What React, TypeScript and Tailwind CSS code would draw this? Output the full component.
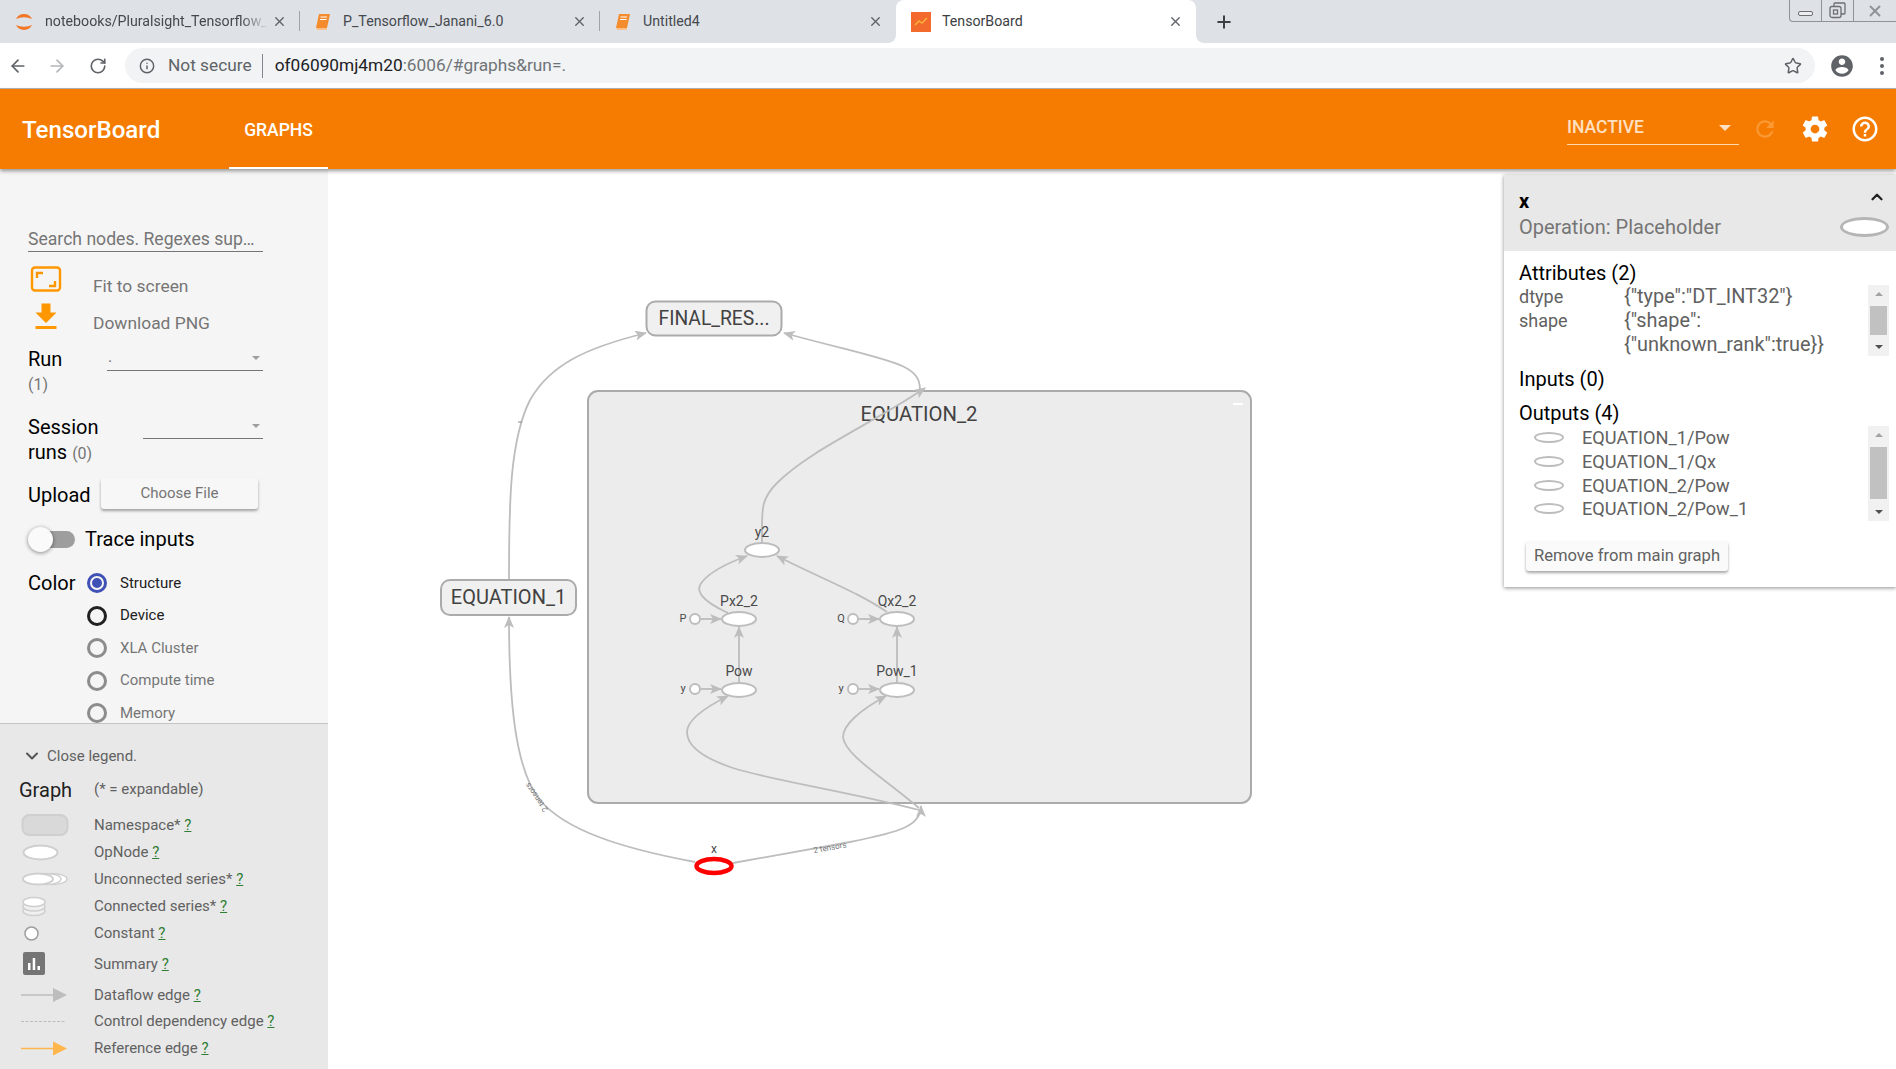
import { ArrowLeft, ArrowRight, RotateCw, Info, Star, X, Plus, ChevronDown, ChevronUp } from "lucide-react";

const P = {
  gear: "M19.43 12.98c.04-.32.07-.64.07-.98s-.03-.66-.07-.98l2.11-1.65c.19-.15.24-.42.12-.64l-2-3.46c-.12-.22-.39-.3-.61-.22l-2.49 1c-.52-.4-1.08-.73-1.69-.98l-.38-2.65C14.46 2.18 14.25 2 14 2h-4c-.25 0-.46.18-.49.42l-.38 2.65c-.61.25-1.17.59-1.69.98l-2.49-1c-.23-.09-.49 0-.61.22l-2 3.46c-.13.22-.07.49.12.64l2.11 1.65c-.04.32-.07.65-.07.98s.03.66.07.98l-2.11 1.65c-.19.15-.24.42-.12.64l2 3.46c.12.22.39.3.61.22l2.49-1c.52.4 1.08.73 1.69.98l.38 2.65c.03.24.24.42.49.42h4c.25 0 .46-.18.49-.42l.38-2.65c.61-.25 1.17-.59 1.69-.98l2.49 1c.23.09.49 0 .61-.22l2-3.46c.12-.22.07-.49-.12-.64l-2.11-1.65zM12 15.5c-1.93 0-3.5-1.57-3.5-3.5s1.57-3.5 3.5-3.5 3.5 1.57 3.5 3.5-1.57 3.5-3.5 3.5z",
  help: "M11 18h2v-2h-2v2zm1-16C6.48 2 2 6.48 2 12s4.48 10 10 10 10-4.48 10-10S17.52 2 12 2zm0 18c-4.41 0-8-3.59-8-8s3.59-8 8-8 8 3.59 8 8-3.59 8-8 8zm0-14c-2.21 0-4 1.79-4 4h2c0-1.1.9-2 2-2s2 .9 2 2c0 2-3 1.75-3 5h2c0-2.25 3-2.5 3-5 0-2.21-1.79-4-4-4z",
  refresh: "M17.65 6.35C16.2 4.9 14.21 4 12 4c-4.42 0-7.99 3.58-7.99 8s3.57 8 7.99 8c3.73 0 6.84-2.55 7.73-6h-2.08c-.82 2.33-3.04 4-5.65 4-3.31 0-6-2.69-6-6s2.69-6 6-6c1.66 0 3.14.69 4.22 1.78L13 11h7V4l-2.35 2.35z",
  user: "M12 2C6.48 2 2 6.48 2 12s4.48 10 10 10 10-4.48 10-10S17.52 2 12 2zm0 3c1.66 0 3 1.34 3 3s-1.34 3-3 3-3-1.34-3-3 1.34-3 3-3zm0 14.2c-2.5 0-4.71-1.28-6-3.22.03-1.99 4-3.08 6-3.08 1.99 0 5.97 1.09 6 3.08-1.29 1.94-3.5 3.22-6 3.22z",
  download: "M19 9h-4V3H9v6H5l7 7 7-7zM5 18v2h14v-2H5z",
};

function BookIcon() {
  return (
    <svg width="18" height="20" viewBox="0 0 18 20" className="shrink-0">
      <path d="M5 2h11l-3 14H2z" fill="#f48b2c" />
      <path d="M2 16h11l-.5 2H3.5z" fill="#fbc08a" />
      <path d="M6.5 5h6.5M6 7.5h6.5" stroke="#fff" strokeWidth="1" />
    </svg>
  );
}

function Spinner() {
  return (
    <svg width="20" height="22" viewBox="0 0 20 22" className="shrink-0">
      <path d="M2 8a9 9 0 0 1 16 0 12 7 0 0 0-16 0z" fill="#f37626" />
      <path d="M2 14a9 9 0 0 0 16 0 12 7 0 0 1-16 0z" fill="#f37626" />
    </svg>
  );
}

function TbFavicon() {
  return (
    <svg width="20" height="20" viewBox="0 0 20 20" className="shrink-0">
      <rect width="20" height="20" fill="#f26b2c" />
      <path d="M4 13l4-4 3 2 5-5" fill="none" stroke="#fbb03b" strokeWidth="1.5" />
    </svg>
  );
}

function Tab({ icon, title, width, sep, fade, extra }: { icon: React.ReactNode; title: string; width: string; sep?: boolean; fade?: boolean; extra?: string }) {
  return (
    <div className={`${width} ${extra ?? ""} h-full flex items-center bg-[#dee1e6] pl-[14px] pr-[13px] relative`}>
      {icon}
      <span className={`ml-[11px] flex-1 overflow-hidden whitespace-nowrap text-[14.2px] text-[#45494e] ${fade ? "[mask-image:linear-gradient(90deg,#000_88%,transparent)]" : ""}`}>{title}</span>
      <X size={15} strokeWidth={2.2} className="ml-[4px] shrink-0 text-[#5f6368]" />
      {sep && <div className="absolute right-0 top-[11px] h-[20px] w-px bg-[#a0a3a8]" />}
    </div>
  );
}

function WindowControls() {
  return (
    <div className="ml-auto self-start h-[22px] w-[107px] flex border-l border-b border-[#8f9296] rounded-bl-[4px]">
      <div className="w-[32px] border-r border-[#8f9296] flex items-center justify-center">
        <div className="mt-[5px] h-[5px] w-[15px] rounded-[2px] border border-[#6b6e72] bg-[#eceef0]" />
      </div>
      <div className="w-[32px] border-r border-[#8f9296] flex items-center justify-center">
        <svg width="17" height="17" viewBox="0 0 17 17" fill="none" stroke="#6b6e72" strokeWidth="1.3">
          <rect x="1" y="4.5" width="11" height="11" rx="2" />
          <path d="M5 4.5V2a1 1 0 0 1 1-1h9a1 1 0 0 1 1 1v9a1 1 0 0 1-1 1h-3" />
          <rect x="4.5" y="8" width="4" height="4" />
        </svg>
      </div>
      <div className="flex-1 flex items-center justify-center">
        <X size={18} strokeWidth={2.5} className="text-[#8f9296]" />
      </div>
    </div>
  );
}

function Chrome() {
  return (
    <div className="shrink-0">
      <div className="h-[43px] flex bg-white">
        <Tab icon={<Spinner />} title="notebooks/Pluralsight_Tensorflow_" width="w-[300px]" sep fade />
        <Tab icon={<BookIcon />} title="P_Tensorflow_Janani_6.0" width="w-[300px]" sep />
        <Tab icon={<BookIcon />} title="Untitled4" width="w-[296px]" extra="rounded-br-[8px]" />
        <div className="w-[300px] h-full bg-[#dee1e6]">
          <div className="h-full bg-white rounded-t-[8px] flex items-center pl-[15px] pr-[13px]">
            <TbFavicon />
            <span className="ml-[11px] flex-1 text-[14.2px] text-[#3c4043]">TensorBoard</span>
            <X size={15} strokeWidth={2.2} className="text-[#5f6368]" />
          </div>
        </div>
        <div className="flex-1 h-full bg-[#dee1e6] rounded-bl-[8px] flex items-center pl-[18px]">
          <Plus size={20} strokeWidth={2.4} className="text-[#3c4043]" />
          <WindowControls />
        </div>
      </div>
      <div className="h-[46px] bg-white border-b border-[#b4b6ba] flex items-center pl-[7px] pr-[12px]">
        <ArrowLeft size={20} strokeWidth={2} className="text-[#5f6368] ml-px" />
        <ArrowRight size={20} strokeWidth={2} className="text-[#b4b6ba] ml-[19px]" />
        <RotateCw size={18} strokeWidth={2.2} className="text-[#5f6368] ml-[22px]" />
        <div className="ml-[18px] h-[35px] flex-1 rounded-full bg-[#f1f3f4] flex items-center pl-[14px] pr-[13px] text-[17.3px]">
          <Info size={16} strokeWidth={2.2} className="text-[#5f6368]" />
          <span className="ml-[13px] text-[#5f6368]">Not secure</span>
          <span className="ml-[10px] h-[24px] w-px bg-[#80868b]" />
          <span className="ml-[12px] text-[#202124]">of06090mj4m20<span className="text-[#6f7377]">:6006/#graphs&amp;run=.</span></span>
          <Star size={18} strokeWidth={2} className="ml-auto text-[#5f6368]" />
        </div>
        <svg width="26" height="26" viewBox="0 0 24 24" className="ml-[14px]"><path d={P.user} fill="#5f6368" /></svg>
        <div className="ml-[25px] flex flex-col gap-[3px]">
          <div className="h-[4px] w-[4px] rounded-full bg-[#5f6368]" />
          <div className="h-[4px] w-[4px] rounded-full bg-[#5f6368]" />
          <div className="h-[4px] w-[4px] rounded-full bg-[#5f6368]" />
        </div>
      </div>
    </div>
  );
}

function Header() {
  return (
    <div className="h-[80px] shrink-0 bg-[#f57c00] flex items-center relative z-10 shadow-[0_2px_4px_rgba(0,0,0,0.4)] text-white">
      <div className="w-[229px] pl-[22px] pt-[2px] text-[24.1px] font-medium">TensorBoard</div>
      <div className="w-[99px] h-full flex items-center justify-center border-b-2 border-white pt-[5px] text-[17.5px] font-medium">GRAPHS</div>
      <div className="ml-auto flex items-center">
        <div className="w-[172px] h-[32px] border-b border-[#ffd9b0] flex items-center justify-between pr-[8px] pb-[2px] text-[#ffe0c2] text-[17.5px] font-medium">
          INACTIVE
          <span className="h-0 w-0 border-x-[6px] border-t-[6px] border-x-transparent border-t-[#ffe0c2]" />
        </div>
        <svg width="26" height="26" viewBox="0 0 24 24" className="ml-[13px]"><path d={P.refresh} fill="#fb9a35" /></svg>
        <svg width="30" height="30" viewBox="0 0 24 24" className="ml-[22px]"><path d={P.gear} fill="#fff" /></svg>
        <svg width="30" height="30" viewBox="0 0 24 24" className="ml-[20px] mr-[16px]"><path d={P.help} fill="#fff" /></svg>
      </div>
    </div>
  );
}

function Select({ width, value }: { width: string; value?: string }) {
  return (
    <div className={`${width} h-[25px] border-b border-[#757575] flex items-start justify-between pl-px pr-[3px] text-[#757575] text-[16px] leading-[22px]`}>
      <span>{value}</span>
      <span className="mt-[10px] h-0 w-0 border-x-[4px] border-t-[4px] border-x-transparent border-t-[#9e9e9e]" />
    </div>
  );
}

function Radio({ label, state }: { label: string; state: "on" | "dark" | "off" }) {
  const ring = state === "on" ? "border-[#3f51b5]" : state === "dark" ? "border-[#212121]" : "border-[#8c8c8c]";
  const text = state === "off" ? "text-[#757575]" : "text-[#212121]";
  return (
    <div className="h-[32.5px] flex items-center">
      <div className={`h-[20px] w-[20px] rounded-full border-[3px] ${ring} flex items-center justify-center`}>
        {state === "on" && <div className="h-[10px] w-[10px] rounded-full bg-[#3f51b5]" />}
      </div>
      <span className={`ml-[13px] text-[15px] ${text}`}>{label}</span>
    </div>
  );
}

function LegendRow({ h, icon, label, iconH }: { h: string; icon: React.ReactNode; label: string; iconH?: number }) {
  return (
    <div className={`${h} flex items-center`}>
      <svg width="75" height={iconH ?? 27} viewBox={`0 0 75 ${iconH ?? 27}`} className="shrink-0">{icon}</svg>
      <span className="text-[15px] text-[#616161] whitespace-nowrap">
        {label} <span className="text-[#2e7d32] underline">?</span>
      </span>
    </div>
  );
}

function Sidebar() {
  return (
    <aside className="w-[328px] shrink-0 flex flex-col bg-[#f5f5f5]">
      <div className="h-[554px] shrink-0 overflow-hidden pl-[28px] pr-[65px] pt-[58px]">
        <div className="h-[25px] border-b border-[#757575] text-[17.6px] leading-[24px] text-[#757575] whitespace-nowrap">Search nodes. Regexes sup…</div>
        <div className="h-[37px] mt-[16px] flex items-center text-[17.4px] text-[#757575]">
          <svg width="36" height="28" viewBox="0 0 36 28" className="shrink-0 mb-[14px]" fill="none" stroke="#ff9800">
            <rect x="4" y="1.5" width="28" height="23" rx="3" strokeWidth="2.4" />
            <path d="M9 12V7h6M27 15v5h-6" strokeWidth="2.4" />
          </svg>
          <span className="ml-[29px]">Fit to screen</span>
        </div>
        <div className="h-[37px] flex items-center text-[17.4px] text-[#757575]">
          <svg width="36" height="36" viewBox="0 0 24 24" className="shrink-0 mb-[14px]"><path d={P.download} fill="#ff9800" /></svg>
          <span className="ml-[29px]">Download PNG</span>
        </div>
        <div className="mt-[4px] flex items-start text-[20px] leading-[25px] text-black">
          <div className="w-[79px] pt-[1px]">Run<div className="text-[16px] text-[#757575]">(1)</div></div>
          <Select width="w-[156px]" value="." />
        </div>
        <div className="mt-[17px] flex items-start text-[20px] leading-[25px] text-black">
          <div className="w-[115px] pt-[1px]">Session<div>runs <span className="text-[16px] text-[#757575]">(0)</span></div></div>
          <Select width="w-[120px]" />
        </div>
        <div className="mt-[13px] h-[31px] flex items-center text-[20px] text-black">
          <span className="w-[73px]">Upload</span>
          <div className="-mt-[2px] w-[157px] h-[31px] rounded-[3px] bg-[#f7f7f7] shadow-[0_2px_3px_rgba(0,0,0,0.35)] flex items-center justify-center text-[15px] text-[#757575]">Choose File</div>
        </div>
        <div className="mt-[16px] h-[26px] flex items-center">
          <div className="relative w-[46px] h-[17px] ml-[1px] rounded-full bg-[#9e9e9e]">
            <div className="absolute -left-[1px] -top-[4px] h-[25px] w-[25px] rounded-full bg-[#fafafa] shadow-[0_1px_4px_rgba(0,0,0,0.45)]" />
          </div>
          <span className="ml-[10px] text-[20px] text-black">Trace inputs</span>
        </div>
        <div className="mt-[14.8px] flex items-start">
          <span className="w-[59px] h-[32.5px] flex items-center text-[20px] text-black">Color</span>
          <div className="flex-1 whitespace-nowrap">
            <Radio label="Structure" state="on" />
            <Radio label="Device" state="dark" />
            <Radio label="XLA Cluster" state="off" />
            <Radio label="Compute time" state="off" />
            <Radio label="Memory" state="off" />
          </div>
        </div>
      </div>
      <div className="flex-1 bg-[#e8e8e8] border-t border-[#c4c4c4] pl-[19px] pt-[19px] overflow-hidden">
        <div className="h-[26px] flex items-center text-[15px] text-[#616161]">
          <ChevronDown size={20} strokeWidth={2.4} className="ml-[3px] text-[#555]" />
          <span className="ml-[5px]">Close legend.</span>
        </div>
        <div className="h-[43px] pb-[2px] flex items-center">
          <span className="w-[75px] text-[20px] text-[#212121]">Graph</span>
          <span className="text-[15px] text-[#616161]">(* = expandable)</span>
        </div>
        <LegendRow h="h-[27px]" label="Namespace*" icon={<rect x="3.5" y="3" width="45" height="20" rx="7" fill="#d9d9d9" stroke="#cfcfcf" strokeWidth="2" />} />
        <LegendRow h="h-[27px]" label="OpNode" icon={<ellipse cx="21.5" cy="13.5" rx="17" ry="7" fill="#fff" stroke="#cfcfcf" strokeWidth="2" />} />
        <LegendRow h="h-[27px]" label="Unconnected series*" icon={<g fill="#fff" stroke="#cfcfcf" strokeWidth="1.5"><ellipse cx="33" cy="13" rx="15" ry="5.5" /><ellipse cx="27" cy="13" rx="15" ry="5.5" /><ellipse cx="19" cy="13" rx="15" ry="5.5" strokeWidth="2" /></g>} />
        <LegendRow h="h-[27px]" label="Connected series*" icon={<g fill="#f0f0f0" stroke="#cfcfcf" strokeWidth="1.5"><ellipse cx="15" cy="18" rx="11" ry="4.5" /><ellipse cx="15" cy="13.5" rx="11" ry="4.5" /><ellipse cx="15" cy="9" rx="11" ry="4.5" fill="#fff" /></g>} />
        <LegendRow h="h-[27px]" label="Constant" icon={<circle cx="12.5" cy="13.5" r="6.5" fill="#fff" stroke="#9e9e9e" strokeWidth="1.5" />} />
        <LegendRow h="h-[35px]" iconH={35} label="Summary" icon={<g><rect x="4" y="5" width="22" height="23" rx="2" fill="#757575" /><path d="M9 16h2.5v7H9zM13.7 11h2.5v12h-2.5zM18.5 19H21v4h-2.5z" fill="#fff" /></g>} />
        <LegendRow h="h-[26px]" iconH={26} label="Dataflow edge" icon={<g><path d="M2 13h36" stroke="#bdbdbd" strokeWidth="1.5" /><path d="M34 6l14 7-14 7z" fill="#bdbdbd" /></g>} />
        <LegendRow h="h-[27px]" label="Control dependency edge" icon={<path d="M2 13.5h45" stroke="#bdbdbd" strokeWidth="1.2" strokeDasharray="3 1.5" />} />
        <LegendRow h="h-[27px]" label="Reference edge" icon={<g><path d="M2 13.5h36" stroke="#ffb74d" strokeWidth="1.5" /><path d="M34 6.5l14 7-14 7z" fill="#ffb74d" /></g>} />
      </div>
    </aside>
  );
}

function Op({ x, y, label, dy }: { x: number; y: number; label: string; dy: number }) {
  return (
    <g>
      <text x={x} y={y + dy} textAnchor="middle" dominantBaseline="middle" fontSize="14" fill="#4a4a4a">{label}</text>
      <ellipse cx={x} cy={y} rx="17" ry="7" fill="#fff" stroke="#bdbdbd" strokeWidth="2" />
    </g>
  );
}

function Con({ x, y, label }: { x: number; y: number; label: string }) {
  return (
    <g>
      <text x={x - 12} y={y + 0.5} textAnchor="middle" dominantBaseline="middle" fontSize="11" fill="#4a4a4a">{label}</text>
      <circle cx={x} cy={y} r="5" fill="#fff" stroke="#bdbdbd" strokeWidth="2" />
      <path d={`M${x + 6} ${y}H${x + 26}`} stroke="#bdbdbd" strokeWidth="1.8" markerEnd="url(#arr)" />
    </g>
  );
}

function Graph() {
  const edge = { fill: "none", stroke: "#bdbdbd", strokeWidth: 1.8 };
  return (
    <svg className="block h-full w-full" viewBox="328 169 1568 900" style={{ fontFamily: "Roboto, sans-serif" }}>
      <defs>
        <marker id="arr" markerWidth="13" markerHeight="10" refX="11" refY="5" orient="auto" markerUnits="userSpaceOnUse">
          <path d="M0 0L12 5 0 10 3 5z" fill="#bdbdbd" />
        </marker>
      </defs>
      <rect x="588" y="391" width="663" height="412" rx="10" fill="#ececec" stroke="#ababab" strokeWidth="2" />
      <path d="M1233 404h10" stroke="#fff" strokeWidth="2" />
      <text x="919" y="416" textAnchor="middle" dominantBaseline="middle" fontSize="20.3" fill="#424242">EQUATION_2</text>

      <rect x="646.5" y="301.5" width="135" height="34" rx="9" fill="#f0f0f0" stroke="#ababab" strokeWidth="2" />
      <text x="714" y="319.5" textAnchor="middle" dominantBaseline="middle" fontSize="19.3" fill="#424242">FINAL_RES...</text>
      <rect x="441" y="580" width="135" height="35" rx="9" fill="#f0f0f0" stroke="#ababab" strokeWidth="2" />
      <text x="508.5" y="598.5" textAnchor="middle" dominantBaseline="middle" fontSize="20" fill="#424242">EQUATION_1</text>

      <path d="M509 579C509 500 510 440 530 400C550 365 585 348 646 333" {...edge} markerEnd="url(#arr)" />
      <path d="M920 390C920 362 890 362 784 333" {...edge} markerEnd="url(#arr)" />
      <path d="M762 543C762 510 760 500 777 483C810 450 870 425 925 388" {...edge} markerEnd="url(#arr)" />
      <path d="M695 862C620 848 565 830 540 800C515 770 509 700 509 617" {...edge} markerEnd="url(#arr)" />
      <path d="M733 863L850 842C900 832 921 826 921 806" {...edge} markerEnd="url(#arr)" />
      <path d="M919 810C850 792 770 780 733 768C700 757 687 745 687 732C687 722 700 710 728 696" {...edge} markerEnd="url(#arr)" />
      <path d="M919 808C880 775 845 755 843 737C843 725 860 710 886 696" {...edge} markerEnd="url(#arr)" />
      <path d="M728 613C700 600 695 590 702 582C710 572 725 564 747 556" {...edge} markerEnd="url(#arr)" />
      <path d="M887 612C860 593 820 578 777 556" {...edge} markerEnd="url(#arr)" />
      <path d="M739 683V627" {...edge} markerEnd="url(#arr)" />
      <path d="M897 683V627" {...edge} markerEnd="url(#arr)" />
      <path d="M518 422h4" stroke="#8a8a8a" strokeWidth="1" />

      <text transform="translate(537 797) rotate(-125)" textAnchor="middle" dominantBaseline="middle" fontSize="8" fill="#757575">2 tensors</text>
      <text transform="translate(830 848) rotate(-10)" textAnchor="middle" dominantBaseline="middle" fontSize="8" fill="#757575">2 tensors</text>

      <Op x={762} y={550} label="y2" dy={-17} />
      <Op x={739} y={619} label="Px2_2" dy={-17} />
      <Op x={897} y={619} label="Qx2_2" dy={-17} />
      <Op x={739} y={690} label="Pow" dy={-18} />
      <Op x={897} y={690} label="Pow_1" dy={-18} />
      <Con x={695} y={619} label="P" />
      <Con x={853} y={619} label="Q" />
      <Con x={695} y={689} label="y" />
      <Con x={853} y={689} label="y" />

      <text x="714" y="850" textAnchor="middle" dominantBaseline="middle" fontSize="12" fill="#4a4a4a">x</text>
      <ellipse cx="714" cy="866" rx="17.5" ry="7" fill="#fff" stroke="#ff0000" strokeWidth="4.5" />
    </svg>
  );
}

function Scroll({ h, thumbTop, thumbH }: { h: string; thumbTop: string; thumbH: string }) {
  return (
    <div className={`${h} w-[21px] shrink-0 bg-[#f1f1f1] flex flex-col items-center justify-between py-[7px] relative`}>
      <span className="h-0 w-0 border-x-[4px] border-b-[4px] border-x-transparent border-b-[#a3a3a3]" />
      <div className={`absolute left-[2px] w-[17px] bg-[#c1c1c1] ${thumbTop} ${thumbH}`} />
      <span className="h-0 w-0 border-x-[4px] border-t-[4px] border-x-transparent border-t-[#505050]" />
    </div>
  );
}

function InfoCard() {
  const outs = ["EQUATION_1/Pow", "EQUATION_1/Qx", "EQUATION_2/Pow", "EQUATION_2/Pow_1"];
  return (
    <div className="absolute right-0 top-[6px] w-[392px] bg-white shadow-[0_1px_4px_rgba(0,0,0,0.45)] pb-[16px]">
      <div className="relative h-[76px] bg-[#e8e8e8] pl-[15px] pt-[14px]">
        <div className="h-[24px] leading-[24px] text-[20px] font-bold text-black">x</div>
        <div className="h-[27px] leading-[28px] text-[20px] text-[#757575]">Operation: Placeholder</div>
        <ChevronUp size={18} strokeWidth={3} className="absolute right-[10px] top-[13px] text-[#212121]" />
        <div className="absolute right-[7px] top-[42px] h-[20px] w-[49px] rounded-[50%] border-[3px] border-[#b5b5b5] bg-white" />
      </div>
      <div className="pl-[15px] pr-[7px]">
        <div className="mt-[9px] h-[26px] leading-[26px] text-[20px] text-black">Attributes (2)</div>
        <div className="-mt-[1px] flex leading-[24px] text-[#616161]">
          <div className="flex-1 flex flex-col">
            <div className="flex"><span className="w-[105px] text-[18px]">dtype</span><span className="text-[19.9px]">{'{"type":"DT_INT32"}'}</span></div>
            <div className="flex"><span className="w-[105px] text-[18px]">shape</span><span className="text-[19.9px]">{'{"shape":'}<br />{'{"unknown_rank":true}}'}</span></div>
          </div>
          <Scroll h="h-[71px]" thumbTop="top-[21px]" thumbH="h-[29px]" />
        </div>
        <div className="mt-[9px] h-[26px] leading-[26px] text-[20px] text-black">Inputs (0)</div>
        <div className="mt-[8px] h-[26px] leading-[26px] text-[20px] text-black">Outputs (4)</div>
        <div className="flex">
          <div className="flex-1">
            {outs.map((o) => (
              <div key={o} className="h-[23.7px] flex items-center pl-[15px] text-[18.2px] text-[#616161]">
                <div className="h-[11px] w-[30px] rounded-[50%] border-2 border-[#bdbdbd] bg-white" />
                <span className="ml-[18px]">{o}</span>
              </div>
            ))}
          </div>
          <Scroll h="h-[95px]" thumbTop="top-[21px]" thumbH="h-[52px]" />
        </div>
        <div className="mt-[20px] ml-[7px] h-[30px] w-[202px] rounded-[3px] bg-[#fafafa] shadow-[0_2px_3px_rgba(0,0,0,0.35)] flex items-center justify-center text-[16.6px] text-[#616161] whitespace-nowrap">Remove from main graph</div>
      </div>
    </div>
  );
}

export default function App() {
  return (
    <div className="h-[1069px] w-[1896px] overflow-hidden flex flex-col bg-white [font-family:Roboto,sans-serif]">
      <Chrome />
      <Header />
      <div className="flex-1 flex min-h-0">
        <Sidebar />
        <main className="relative flex-1 min-w-0">
          <Graph />
          <InfoCard />
        </main>
      </div>
    </div>
  );
}
